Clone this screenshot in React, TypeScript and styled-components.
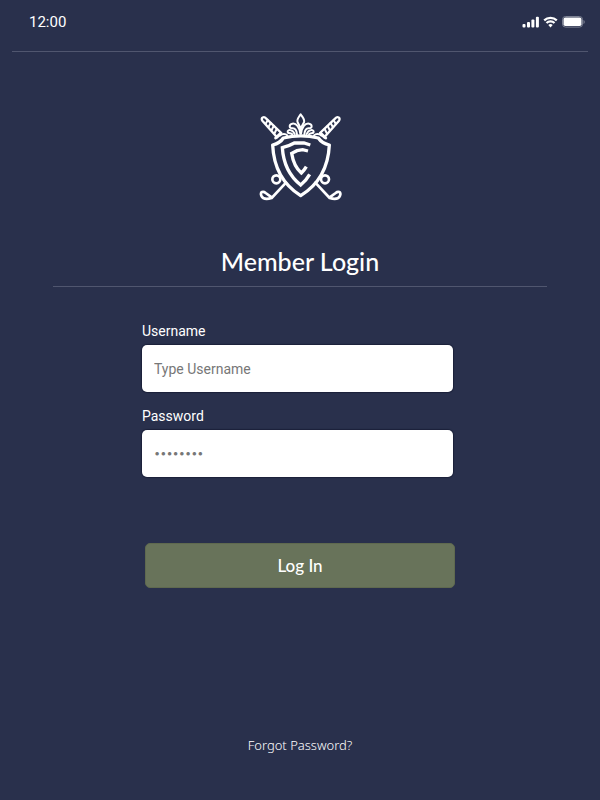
import React from "react";
import styled, { createGlobalStyle } from "styled-components";

const GlobalStyle = createGlobalStyle`
  * { box-sizing: border-box; }
  body {
    margin: 0;
    background: #29304c;
    color: #fff;
    font-family: Roboto, "Liberation Sans", sans-serif;
  }
`;

const Screen = styled.div`
  min-height: 100vh;
  display: flex;
  flex-direction: column;
  background: #29304c;
`;

const StatusBar = styled.header`
  display: flex;
  justify-content: space-between;
  align-items: flex-start;
  height: 52px;
  margin: 0 12px;
  padding: 12px 3px 0 17px;
  border-bottom: 1px solid #50566f;
`;

const Clock = styled.time`
  font-size: 15px;
  line-height: 20px;
`;

const StatusIcons = styled.div`
  display: flex;
  align-items: center;
  gap: 4px;
  height: 20px;
`;

const Main = styled.main`
  flex: 1;
  display: flex;
  flex-direction: column;
  align-items: center;
  padding: 53px 53px 45px;
`;

const Title = styled.h1`
  width: 100%;
  margin: 41px 0 0;
  padding-bottom: 10px;
  border-bottom: 1px solid #50566f;
  font-family: Lato, sans-serif;
  font-size: 25px;
  line-height: 30px;
  font-weight: 500;
  text-align: center;
`;

const Form = styled.form`
  width: 100%;
  max-width: 316px;
  margin-top: 34px;
  display: flex;
  flex-direction: column;
`;

const Field = styled.div`
  display: flex;
  flex-direction: column;
  gap: 4px;
  margin: 0 5px 14px 0;
`;

const Label = styled.label`
  font-size: 14px;
  line-height: 20px;
`;

const Input = styled.input<{ $dots?: boolean }>`
  width: 100%;
  height: 47px;
  padding: ${(p) => (p.$dots ? "0 12px 4px" : "0 12px")};
  border: 0;
  border-radius: 5px;
  background: #fff;
  box-shadow: 0 0 1px 1px #1b213a;
  color: #333;
  font-family: ${(p) => (p.$dots ? "Inter" : "Roboto")}, sans-serif;
  font-size: 14px;

  &::placeholder {
    color: #777;
    opacity: 1;
    font-size: ${(p) => (p.$dots ? "11px" : "14px")};
  }
`;

const LoginButton = styled.button`
  height: 45px;
  margin: 52px 3px 0;
  padding: 0;
  border: 1px solid #5f694f;
  border-radius: 5px;
  background: #68735a;
  color: #fff;
  font-family: Lato, sans-serif;
  font-size: 17px;
  font-weight: 500;
  cursor: pointer;
`;

const ForgotLink = styled.a`
  margin-top: auto;
  color: #fff;
  font-family: "Noto Sans", sans-serif;
  font-size: 13px;
  font-weight: 300;
  line-height: 20px;
  text-decoration: none;
`;

const Signal = () => (
  <svg width="17" height="12" viewBox="0 0 17 12" fill="#fff" aria-hidden="true">
    <rect x="0.5" y="8" width="3" height="3.6" rx="1" />
    <rect x="5" y="6" width="3" height="5.6" rx="1" />
    <rect x="9.4" y="3.5" width="3" height="8.1" rx="1" />
    <rect x="13.9" y="0.8" width="3" height="10.8" rx="1" />
  </svg>
);

const Wifi = () => (
  <svg width="15" height="12" viewBox="0 0 15 12" fill="none" stroke="#fff" strokeWidth="2.2" aria-hidden="true">
    <path d="M1.2 4.4a9 9 0 0 1 12.6 0" />
    <path d="M3.5 7.1a5.6 5.6 0 0 1 8 0" />
    <path d="M5.3 9a3.1 3.1 0 0 1 4.4 0L7.5 11.4z" fill="#fff" stroke="none" />
  </svg>
);

const Battery = () => (
  <svg width="23" height="12" viewBox="0 0 23 12" aria-hidden="true">
    <rect x="0.5" y="0.5" width="20" height="10.6" rx="3" fill="none" stroke="#7d8294" />
    <rect x="1.5" y="1.6" width="18" height="8.4" rx="1.8" fill="#fff" />
    <path d="M21.5 4v4c1.6-.6 1.6-3.4 0-4z" fill="#7d8294" />
  </svg>
);

const Club = () => (
  <>
    <path d="M37 47C31 38 42 33 48 40L94 84L81 97L37 47Z" strokeWidth="7" />
    <path d="M47 56l6-10M56 65l6-11M65 75l6-12M74 84l6-12" strokeWidth="6" />
    <path d="M77 99l15-14" strokeWidth="9" />
    <path d="M108 233L65 279C51 283 38 282 34 272C29 260 40 258 47 264L66 278" strokeWidth="8" />
    <circle cx="79" cy="223" r="12" strokeWidth="8" />
  </>
);

const Crest = () => (
  <svg width="100" height="100" viewBox="0 0 300 300" fill="none" stroke="#fff" strokeLinejoin="round" strokeLinecap="round" role="img" aria-label="Club crest">
    <Club />
    <g transform="translate(304 0) scale(-1 1)">
      <Club />
    </g>
    <path d="M68 120C86 115 95 107 100 99C134 91 172 91 205 99C211 108 221 116 238 120C235 185 207 238 152 272C98 238 71 186 68 120Z" strokeWidth="10" />
    <path d="M181 120L162 114L133 114C121 121 109 125 97 128C100 176 118 213 152 240C163 231 171 222 179 208" strokeWidth="10" strokeLinecap="butt" strokeLinejoin="miter" />
    <path d="M174 138L158 134L141 137L125 145C129 171 140 192 154 204C159 199 164 194 169 185" strokeWidth="10" strokeLinecap="butt" strokeLinejoin="miter" />
    <g strokeWidth="6">
      <path d="M152 28C144 40 139 44 143 52C147 58 150 63 152 76C154 63 158 58 162 52C165 44 160 40 152 28Z" />
      <path d="M151 86C148 66 139 54 127 56C116 58 117 71 127 70C135 69 140 76 141 88" />
      <path d="M153 86C156 66 165 54 177 56C188 58 187 71 177 70C169 69 164 76 163 88" />
      <path d="M134 87C128 72 112 73 113 81C114 87 123 83 127 88" />
      <path d="M170 87C176 72 192 73 191 81C190 87 181 83 177 88" />
      <path d="M90 92C97 85 107 86 112 91M214 92C207 85 197 86 192 91" />
    </g>
  </svg>
);

export default function App() {
  return (
    <>
      <GlobalStyle />
      <Screen>
        <StatusBar>
          <Clock>12:00</Clock>
          <StatusIcons>
            <Signal />
            <Wifi />
            <Battery />
          </StatusIcons>
        </StatusBar>
        <Main>
          <Crest />
          <Title>Member Login</Title>
          <Form onSubmit={(e) => e.preventDefault()}>
            <Field>
              <Label htmlFor="username">Username</Label>
              <Input id="username" type="text" placeholder="Type Username" autoComplete="username" />
            </Field>
            <Field>
              <Label htmlFor="password">Password</Label>
              <Input id="password" type="password" placeholder="••••••••" autoComplete="current-password" $dots />
            </Field>
            <LoginButton type="submit">Log In</LoginButton>
          </Form>
          <ForgotLink href="#forgot">Forgot Password?</ForgotLink>
        </Main>
      </Screen>
    </>
  );
}
